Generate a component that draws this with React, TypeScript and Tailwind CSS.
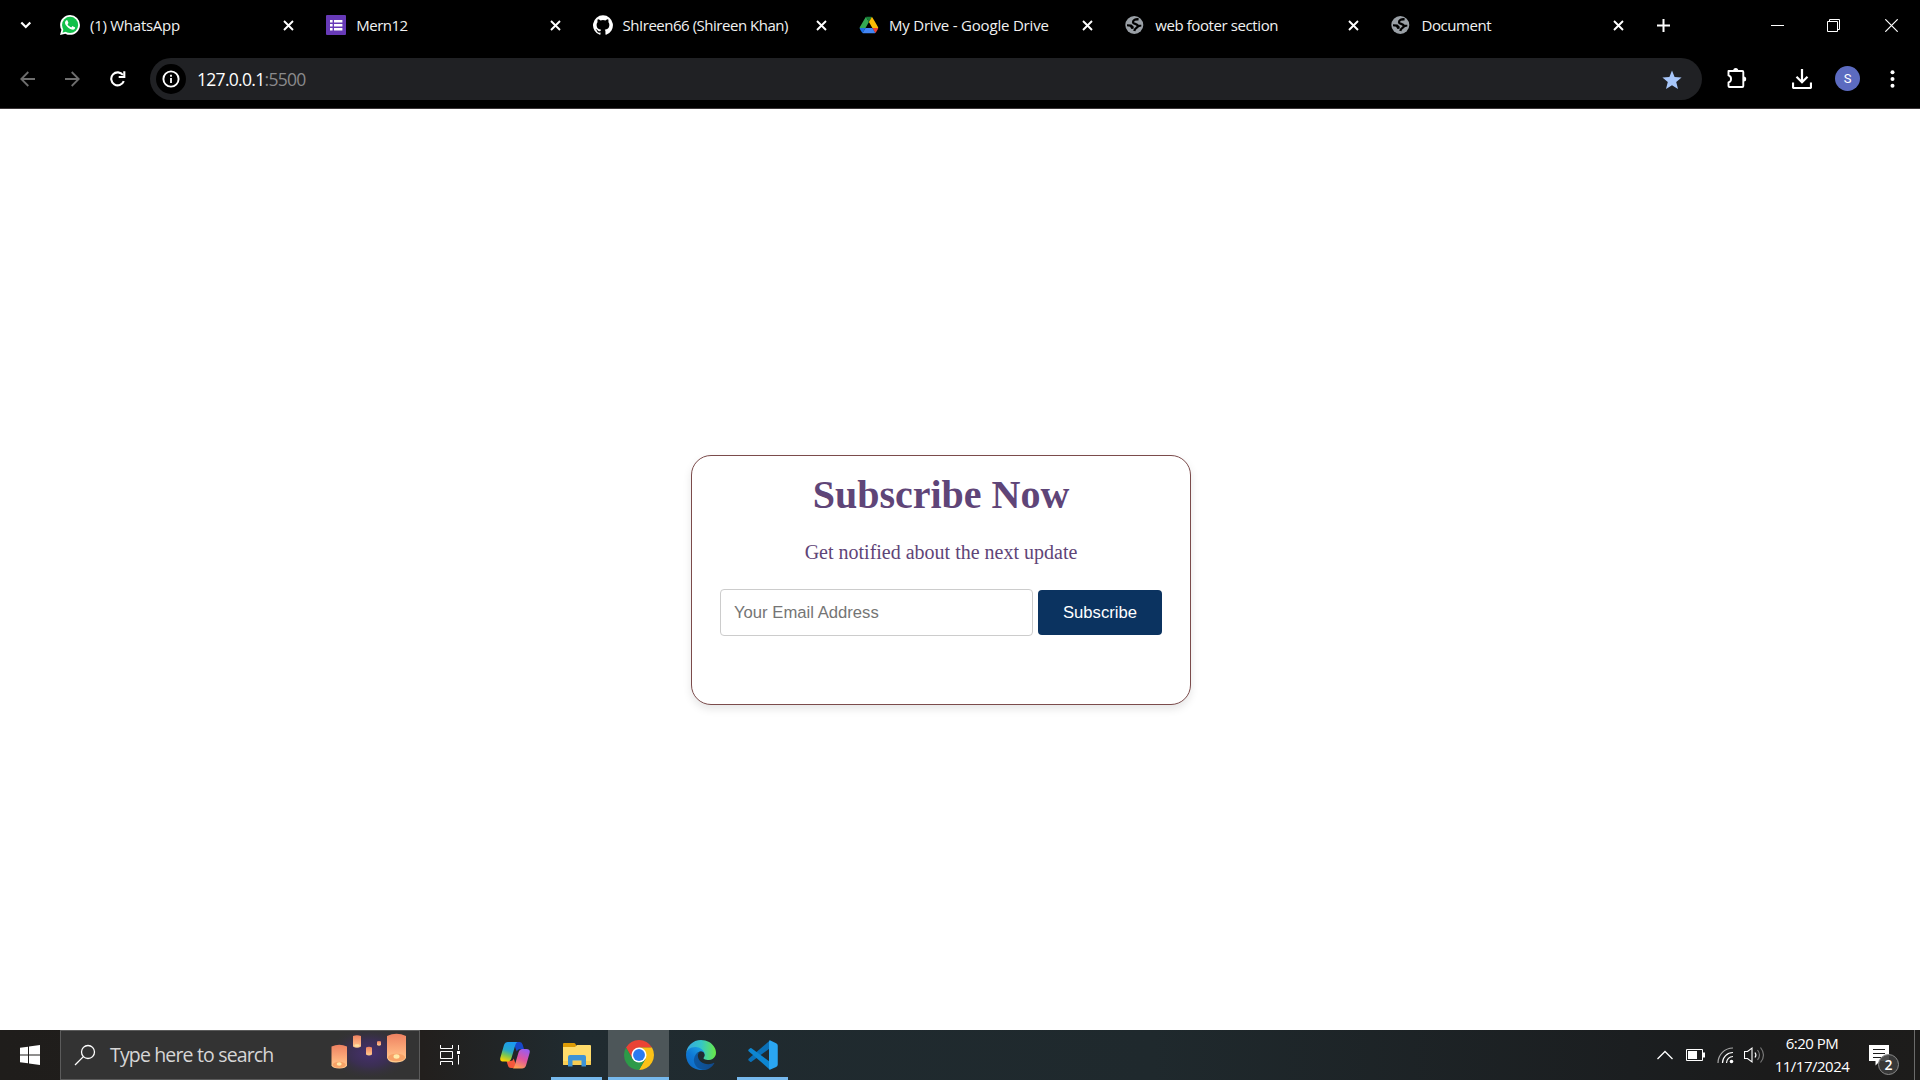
import React from "react";

const WhatsAppIcon = () => (
  <svg width="20" height="20" viewBox="0 0 24 24">
    <path fill="#fff" d="M.06 24l1.69-6.16A11.87 11.87 0 0 1 .16 11.9C.16 5.33 5.5 0 12.05 0a11.82 11.82 0 0 1 8.41 3.49A11.82 11.82 0 0 1 23.95 11.9c0 6.56-5.34 11.9-11.9 11.9a11.9 11.9 0 0 1-5.69-1.45L.06 24z" />
    <circle cx="12.1" cy="11.9" r="9.7" fill="#12c04a" />
    <path fill="#12c04a" d="M3 21.2l1.5-5.6 4 4z" />
    <path fill="#fff" d="M17.47 14.38c-.3-.15-1.76-.87-2.03-.97-.27-.1-.47-.15-.67.15-.2.3-.77.97-.94 1.16-.17.2-.35.22-.64.08-.3-.15-1.26-.46-2.39-1.48-.88-.79-1.48-1.76-1.65-2.06-.17-.3-.02-.46.13-.6.13-.14.3-.35.44-.53.15-.17.2-.3.3-.5.1-.2.05-.37-.02-.52-.08-.15-.67-1.61-.92-2.2-.24-.58-.49-.5-.67-.51h-.57c-.2 0-.52.07-.79.37-.27.3-1.04 1.01-1.04 2.48s1.07 2.87 1.22 3.07c.15.2 2.1 3.2 5.08 4.49.71.3 1.26.49 1.69.62.71.23 1.36.2 1.87.12.57-.08 1.76-.72 2-1.41.26-.7.26-1.29.18-1.42-.07-.12-.27-.2-.57-.34z" />
  </svg>
);

const FormsIcon = () => (
  <svg width="20" height="20" viewBox="0 0 20 20">
    <rect width="20" height="20" rx="1" fill="#673ab7" />
    <path fill="#fff" d="M4 5h2.6v2.4H4zM8 5h8.4v2.4H8zM4 9h2.6v2.4H4zM8 9h8.4v2.4H8zM4 13h2.6v2.4H4zM8 13h8.4v2.4H8z" />
  </svg>
);

const GitHubIcon = () => (
  <svg width="20" height="20" viewBox="0 0 24 24">
    <path fill="#fff" d="M12 .3a12 12 0 0 0-3.8 23.38c.6.12.83-.26.83-.57L9 21.07c-3.34.72-4.04-1.61-4.04-1.61-.55-1.39-1.34-1.76-1.34-1.76-1.08-.74.09-.73.09-.73 1.2.09 1.84 1.24 1.84 1.24 1.07 1.83 2.8 1.3 3.49 1 .1-.78.42-1.31.76-1.61-2.67-.3-5.47-1.33-5.47-5.93 0-1.31.47-2.38 1.24-3.22-.14-.3-.54-1.52.1-3.18 0 0 1-.32 3.3 1.23a11.5 11.5 0 0 1 6 0c2.28-1.55 3.29-1.23 3.29-1.23.64 1.66.24 2.88.12 3.18a4.65 4.65 0 0 1 1.23 3.22c0 4.61-2.8 5.63-5.48 5.92.42.36.81 1.1.81 2.22l-.01 3.29c0 .31.2.69.82.57A12 12 0 0 0 12 .3" />
  </svg>
);

const DriveIcon = () => (
  <svg width="20" height="20" viewBox="-3 -7 94 92">
    <path d="m6.6 66.85 3.85 6.65c.8 1.4 1.95 2.5 3.3 3.3l13.75-23.8h-27.5c0 1.55.4 3.1 1.2 4.5z" fill="#1a6fe8" />
    <path d="m43.65 25-13.75-23.8c-1.35.8-2.5 1.9-3.3 3.3l-25.4 44a9.06 9.06 0 0 0 -1.2 4.5h27.5z" fill="#34a853" />
    <path d="m73.55 76.8c1.35-.8 2.5-1.9 3.3-3.3l1.6-2.75 7.65-13.25c.8-1.4 1.2-2.95 1.2-4.5h-27.5l5.85 11.5z" fill="#ea4335" />
    <path d="m43.65 25 13.75-23.8c-1.35-.8-2.9-1.2-4.5-1.2h-18.5c-1.6 0-3.15.45-4.5 1.2z" fill="#188038" />
    <path d="m59.8 53h-32.3l-13.75 23.8c1.35.8 2.9 1.2 4.5 1.2h50.8c1.6 0 3.15-.45 4.5-1.2z" fill="#4285f4" />
    <path d="m73.4 26.5-12.7-22c-.8-1.4-1.95-2.5-3.3-3.3l-13.75 23.8 16.15 28h27.45c0-1.55-.4-3.1-1.2-4.5z" fill="#fbbc04" />
  </svg>
);

const GlobeIcon = () => (
  <svg width="20" height="20" viewBox="0 0 20 20">
    <circle cx="9.300" cy="10" r="9" fill="#9aa0a6" />
    <path d="M13.600 4.300C10.500 4 8 5 8 7.200c0 2.200 4.600 1.200 4.800 3.800.1 2-3 1.800-3.500 5" fill="none" stroke="#000" strokeWidth="2.300" />
    <path d="M2 9.200l4.500.4 2.300 2.200-.3 1.900-2 .4-1.500-2.300L2 11.200z" fill="#000" />
    <path d="M11.500 9.800h4.800v1.800l-4 1z" fill="#000" />
  </svg>
);

const CloseX = () => (
  <svg width="11" height="11" viewBox="0 0 11 11">
    <path d="M1 1l9 9M10 1l-9 9" stroke="#fff" strokeWidth="1.900" />
  </svg>
);

const tabs = [
  { icon: <WhatsAppIcon />, title: "(1) WhatsApp", spacing: "tracking-[-0.260px]", pad: "pr-[32px]" },
  { icon: <FormsIcon />, title: "Mern12", spacing: "tracking-[-0.500px]", pad: "pr-[32px]" },
  { icon: <GitHubIcon />, title: "ShIreen66 (Shireen Khan)", spacing: "tracking-[-0.480px]", pad: "pr-[32px]" },
  { icon: <DriveIcon />, title: "My Drive - Google Drive", spacing: "tracking-[-0.190px]", pad: "pr-[32px]" },
  { icon: <GlobeIcon />, title: "web footer section", spacing: "tracking-[-0.400px]", pad: "pr-[32px]" },
  { icon: <GlobeIcon />, title: "Document", spacing: "tracking-[-0.450px]", pad: "pr-[34px]" },
];

function TabStrip() {
  return (
    <div className="flex h-[50px] items-center">
      <div className="flex w-[60px] shrink-0 pl-5">
        <svg width="12" height="10" viewBox="0 0 12 10">
          <path d="M1.300 2.500l4.500 4.500 4.500-4.500" fill="none" stroke="#fff" strokeWidth="2.200" />
        </svg>
      </div>
      {tabs.map((t) => (
        <div key={t.title} className={"flex w-[266.300px] shrink-0 items-center " + t.pad}>
          <span className="w-5 shrink-0">{t.icon}</span>
          <span className={"ml-[10px] flex-1 whitespace-nowrap text-[15px] leading-5 text-[#f1f1f1] " + t.spacing}>{t.title}</span>
          <CloseX />
        </div>
      ))}
      <svg className="-ml-[1px] shrink-0" width="13" height="13" viewBox="0 0 13 13">
        <path d="M6.500 0v13M0 6.500h13" stroke="#fff" strokeWidth="2" />
      </svg>
      <div className="ml-auto flex shrink-0 items-center pr-[22px]">
        <svg width="13" height="13" viewBox="0 0 13 13">
          <path d="M0 6.500h13" stroke="#fff" />
        </svg>
        <svg className="ml-[43px]" width="13" height="13" viewBox="0 0 13 13">
          <path d="M.5 2.500h10v10H.5zM2.500 2.500v-2h10v10h-2" fill="none" stroke="#fff" />
        </svg>
        <svg className="ml-[45px]" width="13" height="13" viewBox="0 0 13 13">
          <path d="M.3.3l12.400 12.400M12.700.3L.3 12.700" stroke="#fff" strokeWidth="1.200" />
        </svg>
      </div>
    </div>
  );
}

function Toolbar() {
  return (
    <div className="flex h-[58px] items-center">
      <svg className="ml-[20px] shrink-0" width="16" height="16" viewBox="0 0 16 16">
        <path d="M15 8H1.500M8.300 1L1.300 8l7 7" fill="none" stroke="#6e6e6e" strokeWidth="1.800" />
      </svg>
      <svg className="ml-[28px] shrink-0" width="16" height="16" viewBox="0 0 16 16">
        <path d="M1 8h13.500M7.700 1l7 7-7 7" fill="none" stroke="#6e6e6e" strokeWidth="1.800" />
      </svg>
      <svg className="ml-[30px] shrink-0" width="16" height="16" viewBox="0 0 16 16">
        <path d="M13.800 10.200A6.500 6.500 0 1 1 13 4" fill="none" stroke="#fff" strokeWidth="2.100" />
        <path d="M14.300.2v5.800H8.700" fill="none" stroke="#fff" strokeWidth="2.100" />
      </svg>
      <div className="ml-[24px] flex h-[42px] w-[1552px] shrink-0 items-center rounded-full bg-[#202124] pl-[6px] pr-[20px]">
        <div className="flex size-[30px] items-center justify-center rounded-full bg-black">
          <svg width="18" height="18" viewBox="0 0 18 18">
            <circle cx="9" cy="9" r="7.600" fill="none" stroke="#fff" strokeWidth="1.900" />
            <path d="M9 8v5M9 4.800v1.900" stroke="#fff" strokeWidth="1.800" />
          </svg>
        </div>
        <div className="ml-[11px] flex-1 text-[17.500px] leading-6 tracking-[-0.700px] text-white">
          127.0.0.1<span className="text-[#8a8a8c]">:5500</span>
        </div>
        <svg className="mt-[2px]" width="20" height="20" viewBox="0 0 20 20">
          <path fill="#a8c7fa" d="M10 .5l2.600 6.600 7 .5-5.400 4.500 1.800 6.900-6-3.800L4 19l1.800-6.900L.4 7.600l7-.5z" />
        </svg>
      </div>
      <svg className="-mt-[2px] ml-[24px] shrink-0" width="22" height="22" viewBox="0 0 22 22">
        <path d="M2.500 4h13.800a1 1 0 0 1 1 1V19a1 1 0 0 1-1 1H3.500a1 1 0 0 1-1-1v-3.600c3.400-1 3.400-6 0-7z" fill="none" stroke="#fff" strokeWidth="1.900" strokeLinejoin="round" />
        <path d="M7.200 3.600a2.500 2.500 0 0 1 5 0zM17.700 9.500a2.500 2.500 0 0 1 0 5z" fill="#fff" />
      </svg>
      <svg className="ml-[44px] shrink-0" width="20" height="20" viewBox="0 0 20 20">
        <path d="M10 0v12.500M4.500 7.800l5.500 5.500 5.500-5.500M1 13.500v4.500q0 1 1 1h16q1 0 1-1v-4.500" fill="none" stroke="#fff" strokeWidth="2.200" />
      </svg>
      <div className="-mt-[1px] ml-[23px] flex size-[25px] shrink-0 items-center justify-center rounded-full bg-[#5c6bc0] font-['Roboto',sans-serif] text-[13px] text-white">
        S
      </div>
      <svg className="ml-[30px] shrink-0" width="5" height="18" viewBox="0 0 5 18">
        <circle cx="2.500" cy="2.200" r="2" fill="#fff" />
        <circle cx="2.500" cy="9" r="2" fill="#fff" />
        <circle cx="2.500" cy="15.800" r="2" fill="#fff" />
      </svg>
    </div>
  );
}

function SubscribeCard() {
  return (
    <div className="mt-[346px] ml-[691px] h-[250px] w-[500px] rounded-[20px] border border-[#7b4b4b] bg-white text-center shadow-[0_4px_8px_rgba(0,0,0,0.1)]">
      <h1 className="mt-[16px] font-['Liberation_Serif',serif] text-[40px] leading-[46px] font-bold text-[#5f4578]">
        Subscribe Now
      </h1>
      <p className="mt-[23px] font-['Liberation_Serif',serif] text-[20px] leading-[23px] text-[#5f4578]">
        Get notified about the next update
      </p>
      <div className="mt-[25px] ml-[28px] flex items-center text-left font-['Liberation_Sans',sans-serif] text-[16.670px]">
        <input
          placeholder="Your Email Address"
          className="h-[47px] w-[313px] rounded-[4px] border border-[#ccc] px-[13px] placeholder:text-[#757575]"
        />
        <button className="ml-[5px] h-[45px] w-[124px] rounded-[4px] bg-[#0b3360] text-white">Subscribe</button>
      </div>
    </div>
  );
}

const Lanterns = () => (
  <svg width="90" height="48" viewBox="0 0 90 48">
    <defs>
      <radialGradient id="night">
        <stop offset="0" stopColor="#46306f" />
        <stop offset="0.500" stopColor="#3b2f52" />
        <stop offset="1" stopColor="#333333" stopOpacity="0" />
      </radialGradient>
      <linearGradient id="paper" x1="0" y1="0" x2="0" y2="1">
        <stop offset="0" stopColor="#ee8161" />
        <stop offset="0.600" stopColor="#fdae7c" />
        <stop offset="1" stopColor="#ffcf91" />
      </linearGradient>
    </defs>
    <ellipse cx="42" cy="22" rx="42" ry="27" fill="url(#night)" />
    <g fill="url(#paper)">
      <path d="M3.500 15.500q7.800-3.500 15.500 0v19q-1 3-7.700 3t-7.800-3z" />
      <path d="M25 5q4-1.500 8 0v10.500q-4 2.500-8 0z" />
      <path d="M38 16.500q3-1.500 6 0v7q-3 2.200-6 0z" />
      <path d="M49 10.500q2-1 4 0v3.500q-2 1.500-4 0z" />
      <path d="M59 5q9.500-4.500 19 0v22q-2 4-9.500 4.500T59 27z" />
    </g>
    <ellipse cx="11.200" cy="33.800" rx="6.600" ry="3" fill="#f7a267" />
    <ellipse cx="11.200" cy="33" rx="2.500" ry="1.800" fill="#ffe9a8" />
    <ellipse cx="68.500" cy="26.500" rx="8.500" ry="3.800" fill="#f7a267" />
    <ellipse cx="68.500" cy="25.500" rx="3" ry="2.200" fill="#ffe9a8" />
    <ellipse cx="29" cy="14.500" rx="2.600" ry="1.200" fill="#ffe0a0" />
  </svg>
);

const TaskViewIcon = () => (
  <svg width="22" height="20" viewBox="0 0 22 20">
    <path d="M1.500 0v3.500h12V0M1.500 20v-3.500h12V20M1.500 6.500h12v7h-12zM19.500 0v5M19.500 10v9.500" fill="none" stroke="#fff" />
    <path d="M18 6h3v3h-3z" fill="#fff" />
  </svg>
);

const CopilotIcon = () => (
  <svg width="30" height="28" viewBox="0 0 30 28">
    <defs>
      <linearGradient id="cpA" x1="0.600" y1="0" x2="0.300" y2="1">
        <stop offset="0" stopColor="#1b9af0" />
        <stop offset="0.450" stopColor="#27a8c8" />
        <stop offset="0.700" stopColor="#7cc650" />
        <stop offset="1" stopColor="#ffd400" />
      </linearGradient>
      <linearGradient id="cpB" x1="0.700" y1="0" x2="0.300" y2="1">
        <stop offset="0" stopColor="#9a5cf0" />
        <stop offset="0.500" stopColor="#e0559f" />
        <stop offset="1" stopColor="#ffa050" />
      </linearGradient>
    </defs>
    <path d="M13 1h6.500q2.300 0 3 2.300L24 8h-4q-2.500 0-3.200 2.500z" fill="#1747c9" />
    <path d="M17 27h-6q-2.300 0-3-2.300L6.500 20h4q2.500 0 3.200-2.500z" fill="#f4583c" />
    <path d="M8 1h9.500q-1.500.5-2.200 3L11.500 17q-1 3.500-4 3.500H3.500Q-.6 20.500.4 16.500L4 4Q5 1 8 1z" fill="url(#cpA)" />
    <path d="M22 27.500h-9.500q1.500-.5 2.200-3l3.800-13q1-3.500 4-3.500h4q4.100 0 3.100 4L26 24.500q-1 3-4 3z" fill="url(#cpB)" />
  </svg>
);

const ExplorerIcon = () => (
  <svg width="28" height="24" viewBox="0 0 28 24">
    <path d="M0 1q0-1 1-1h10q1 0 1.500 1L14 4H0z" fill="#dd9b05" />
    <path d="M0 4h12l2-2h13q1 0 1 1v18q0 1-1 1H1q-1 0-1-1z" fill="#ffdc6b" />
    <path d="M0 18h28v3q0 1-1 1H1q-1 0-1-1z" fill="#f9cd52" />
    <path d="M5 23.500V14q0-2 2-2h14q2 0 2 2v9.500h-4.500V17.500h-9v6z" fill="#3d93d6" />
  </svg>
);

const ChromeIcon = () => (
  <svg width="30" height="30" viewBox="0 0 48 48">
    <path d="M24 12h20.780A24 24 0 0 0 3.220 12L13.600 30z" fill="#ea4335" />
    <path d="M34.400 30L24 48A24 24 0 0 0 44.780 12H24z" fill="#fbc116" />
    <path d="M13.600 30L3.220 12A24 24 0 0 0 24 48l10.400-18z" fill="#2d9a48" />
    <circle cx="24" cy="24" r="12" fill="#fff" />
    <circle cx="24" cy="24" r="9.500" fill="#2a7af0" />
  </svg>
);

const EdgeIcon = () => (
  <svg width="30" height="30" viewBox="0 0 256 256">
    <defs>
      <linearGradient id="edA" x1="63" x2="242" y1="178" y2="178" gradientUnits="userSpaceOnUse">
        <stop offset="0" stopColor="#0c59a4" />
        <stop offset="1" stopColor="#114a8b" />
      </linearGradient>
      <linearGradient id="edB" x1="157" x2="46" y1="100" y2="220" gradientUnits="userSpaceOnUse">
        <stop offset="0" stopColor="#1b9de2" />
        <stop offset="0.600" stopColor="#0e78d4" />
        <stop offset="1" stopColor="#0f6fc8" />
      </linearGradient>
      <linearGradient id="edC" x1="10" x2="250" y1="80" y2="90" gradientUnits="userSpaceOnUse">
        <stop offset="0" stopColor="#35a8e0" />
        <stop offset="0.500" stopColor="#36c7c5" />
        <stop offset="1" stopColor="#66e84a" />
      </linearGradient>
    </defs>
    <path fill="url(#edA)" d="M235.700 195.500a93.700 93.700 0 0 1-10.600 4.700 101.900 101.900 0 0 1-35.900 6.400c-47.300 0-88.500-32.500-88.500-74.300a31.500 31.500 0 0 1 16.400-27.300c-42.800 1.800-53.800 46.400-53.800 72.500 0 74 68.100 81.400 82.800 81.400 7.900 0 19.800-2.300 27-4.600l1.300-.4a128.300 128.300 0 0 0 66.600-52.800 4 4 0 0 0-5.300-5.600z" />
    <path fill="url(#edB)" d="M105.700 241.400a79.200 79.200 0 0 1-22.700-21.300 80.700 80.700 0 0 1 29.500-120c3.200-1.500 8.500-4.100 15.600-4a32.400 32.400 0 0 1 25.700 13 31.900 31.900 0 0 1 6.300 18.700c0-.2 24.500-79.600-80-79.600-43.900 0-80 41.700-80 78.200a130.200 130.200 0 0 0 12.100 56 128 128 0 0 0 156.400 67 75.500 75.500 0 0 1-62.800-8z" />
    <path fill="url(#edC)" d="M152.300 148.900c-.9 1-3.400 2.500-3.400 5.600 0 2.600 1.700 5.200 4.800 7.300 14.300 10 41.400 8.600 41.500 8.600a59.600 59.600 0 0 0 30.300-8.300 61.400 61.400 0 0 0 30.400-52.900c.3-22.400-8-37.300-11.300-43.900C223.500 23.900 177.700 0 128 0A128 128 0 0 0 0 126.200c.5-36.500 36.800-66 80-66 3.500 0 23.500.3 42 10a72.600 72.600 0 0 1 30.900 29.300c6.100 10.600 7.200 24.100 7.200 29.500s-2.700 13.300-7.800 19.900z" />
  </svg>
);

const VSCodeIcon = () => (
  <svg width="30" height="30" viewBox="0 0 24 24">
    <path d="M17.500.3L.5 15q-.6.700 0 1.400l1.200 1q.5.400 1.100 0L19 5.500z" fill="#0a70b7" />
    <path d="M17.500 23.700L.5 9q-.6-.7 0-1.400l1.200-1q.5-.400 1.100 0L19 18.500z" fill="#0d86d1" />
    <path d="M17.500.2l5 2.300q1.300.6 1.300 2v15q0 1.400-1.300 2l-5 2.300q-.7-.3-.7-1V1.200q0-.7.7-1z" fill="#2aa6f2" />
  </svg>
);

const apps = [
  { id: "copilot", icon: <CopilotIcon />, cell: "", bar: "" },
  { id: "explorer", icon: <ExplorerIcon />, cell: "", bar: "w-[51px] bg-[#76b9ed]" },
  { id: "chrome", icon: <ChromeIcon />, cell: "bg-[#4d5659]", bar: "w-[61px] bg-[#76b9ed]" },
  { id: "edge", icon: <EdgeIcon />, cell: "", bar: "" },
  { id: "code", icon: <VSCodeIcon />, cell: "", bar: "w-[51px] bg-[#76b9ed]" },
];

function Taskbar() {
  return (
    <div className="flex h-[50px] bg-linear-[90deg,#1f1d1b_0%,#221f1d_22%,#202b30_30%,#1f292d_60%,#1b1e20_85%,#1b1b1b_92%,#1d1c1b_100%]">
      <div className="flex w-[60px] shrink-0 items-center justify-center">
        <svg width="20" height="20" viewBox="0 0 20 20">
          <path fill="#fff" d="M0 2.800l8-1.100v7.800H0zM9 1.500L20 0v9.500H9zM0 10.500h8v7.800l-8-1.100zM9 10.500h11V20L9 18.500z" />
        </svg>
      </div>
      <div className="flex w-[360px] shrink-0 items-center border border-[#5b5b5b] bg-[#333]">
        <svg className="ml-[13px]" width="22" height="22" viewBox="0 0 22 22">
          <circle cx="14" cy="8" r="6.500" fill="none" stroke="#fff" strokeWidth="1.300" />
          <path d="M9.400 12.600L1 21" stroke="#fff" strokeWidth="1.300" />
        </svg>
        <span className="ml-[14px] flex-1 whitespace-nowrap text-[19.500px] tracking-[-0.840px] text-[#d6d6d6]">Type here to search</span>
        <div className="mr-[1px]"><Lanterns /></div>
      </div>
      <div className="flex w-[64px] shrink-0 items-center justify-center pt-[0px] pr-[4px]">
        <TaskViewIcon />
      </div>
      {apps.map((a) => (
        <div key={a.id} className="flex w-[62px] shrink-0 flex-col items-center pr-[1px]">
          <div className={"flex h-[47px] w-full items-center justify-center pt-[3px] " + a.cell}>{a.icon}</div>
          <div className={"h-[3px] " + a.bar} />
        </div>
      ))}
      <div className="ml-auto flex shrink-0 items-center">
        <svg width="16" height="10" viewBox="0 0 16 10">
          <path d="M.5 9L8 1.500 15.500 9" fill="none" stroke="#fff" strokeWidth="1.300" />
        </svg>
        <svg className="ml-[13px]" width="19" height="12" viewBox="0 0 19 12">
          <path d="M.5.5h16v11H.5z" fill="none" stroke="#fff" />
          <path d="M2 2h9v8H2zM17 3.500h2v5h-2z" fill="#fff" />
        </svg>
        <svg className="ml-[12px]" width="17" height="17" viewBox="0 0 17 17">
          <circle cx="14.500" cy="14.500" r="1.800" fill="#fff" />
          <path d="M9.500 16a6.500 6.500 0 0 1 6.500-6.500M5.500 16A10.500 10.500 0 0 1 16 5.500" fill="none" stroke="#fff" strokeWidth="1.200" />
          <path d="M1 16A15 15 0 0 1 16 1" fill="none" stroke="#aaa" strokeWidth="1.200" />
        </svg>
        <svg className="ml-[10px]" width="21" height="18" viewBox="0 0 21 18">
          <path d="M.5 5.500h3L8 2v14l-4.500-3.500h-3z" fill="none" stroke="#fff" strokeWidth="1.100" />
          <path d="M11 6.500q1.800 2.500 0 5" fill="none" stroke="#fff" strokeWidth="1.200" />
          <path d="M13.500 4q4 5 0 10M16.500 1.500q6 7.500 0 15" fill="none" stroke="#777" strokeWidth="1.200" />
        </svg>
        <div className="ml-[8px] w-[78px] text-center text-[15px] leading-[23px] whitespace-nowrap text-white">
          <div className="tracking-[-0.500px]">6:20 PM</div>
          <div className="tracking-[-0.500px]">11/17/2024</div>
        </div>
        <div className="relative ml-[18px] h-5 w-5">
          <svg className="absolute top-0 left-0 overflow-visible" width="20" height="22" viewBox="0 0 20 22">
            <path d="M0 0h20v16h-9l-4.500 4.500V16H0z" fill="#fff" />
            <path d="M4 4.500h12M4 8.500h12M4 12.500h8" stroke="#1c1c1c" />
          </svg>
          <div className="absolute top-[9px] left-[9px] flex size-[21px] items-center justify-center rounded-full border border-[#8a8a8a] bg-[#3c3c3c]/90 text-[14px] leading-none font-semibold text-white">
            2
          </div>
        </div>
        <div className="ml-[25px] h-[50px] w-[6px] border-l border-[#6b6b6b]" />
      </div>
    </div>
  );
}

export default function App() {
  return (
    <div className="flex h-[1080px] w-[1920px] flex-col overflow-hidden bg-white font-['Open_Sans','Noto_Sans',sans-serif]">
      <header className="h-[109px] shrink-0 border-b border-[#3b3638] bg-black">
        <TabStrip />
        <Toolbar />
      </header>
      <main className="flex-1">
        <SubscribeCard />
      </main>
      <Taskbar />
    </div>
  );
}
